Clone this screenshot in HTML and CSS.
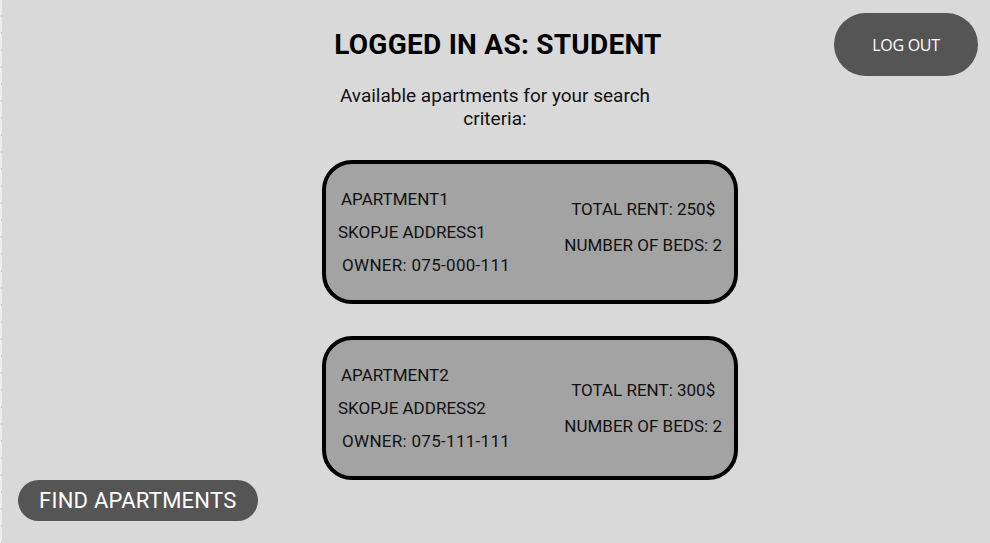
FILE: index.html
```html
<!DOCTYPE html>
<html lang="en">
<head>
<meta charset="utf-8">
<title>Apartments</title>
<link rel="stylesheet" href="styles.css">
</head>
<body>
<div class="page">
  <header class="top">
    <div class="spacer"></div>
    <h1 class="title">LOGGED IN AS: STUDENT</h1>
    <div class="actions"><button class="logout">LOG OUT</button></div>
  </header>
  <p class="subtitle">Available apartments for your search criteria:</p>
  <section class="list">
    <article class="card card-first">
      <div class="info">
        <span class="name">APARTMENT1</span>
        <span class="addr">SKOPJE ADDRESS1</span>
        <span class="owner">OWNER: 075-000-111</span>
      </div>
      <div class="stats">
        <span>TOTAL RENT: 250$</span>
        <span>NUMBER OF BEDS: 2</span>
      </div>
    </article>
    <article class="card">
      <div class="info">
        <span class="name">APARTMENT2</span>
        <span class="addr">SKOPJE ADDRESS2</span>
        <span class="owner">OWNER: 075-111-111</span>
      </div>
      <div class="stats">
        <span>TOTAL RENT: 300$</span>
        <span>NUMBER OF BEDS: 2</span>
      </div>
    </article>
  </section>
  <div class="bottom"><button class="find">FIND APARTMENTS</button></div>
</div>
</body>
</html>
```
FILE: styles.css
```css
html, body {
  margin: 0;
  padding: 0;
}
body {
  width: 990px;
  height: 543px;
  overflow: hidden;
  font-family: Roboto, "Noto Sans", sans-serif;
  color: #111;
  background:
    repeating-linear-gradient(to bottom, transparent 0 15px, #c6c6c6 15px 17px, transparent 17px 16px) 1px 0 / 1px 100% no-repeat,
    linear-gradient(#ececec, #ececec) 0 0 / 2px 100% no-repeat,
    #d9d9d9;
}
.page {
  display: flex;
  flex-direction: column;
}
.top {
  display: grid;
  grid-template-columns: 1fr auto 1fr;
  align-items: center;
  padding-top: 13px;
}
.title {
  margin: 0;
  font-size: 28px;
  font-weight: 700;
  color: #000;
  letter-spacing: 0.25px;
  padding-left: 6px;
}
.actions {
  display: flex;
  justify-content: flex-end;
  padding-right: 12px;
}
.logout {
  width: 144px;
  height: 63px;
  border: none;
  border-radius: 32px;
  background: #555555;
  color: #fff;
  font-family: "Open Sans", Roboto, sans-serif;
  font-size: 16px;
  letter-spacing: -0.3px;
}
.subtitle {
  width: 330px;
  margin: 8px auto 0;
  text-align: center;
  font-size: 19px;
  line-height: 23px;
  color: #111;
}
.list {
  display: flex;
  flex-direction: column;
  align-items: center;
  gap: 32px;
  padding-left: 70px;
  margin-top: 30px;
}
.card {
  box-sizing: border-box;
  width: 416px;
  height: 144px;
  border: 4px solid #000;
  border-radius: 30px;
  background: #a3a3a3;
  display: flex;
  align-items: center;
  justify-content: space-between;
  padding: 0 12px;
  font-size: 17px;
}
.info {
  display: flex;
  flex-direction: column;
  gap: 13px;
  line-height: 20px;
}
.name { margin-left: 3px; }
.owner { margin-left: 4px; letter-spacing: 0.3px; }
.stats {
  display: flex;
  flex-direction: column;
  align-items: center;
  gap: 16px;
  line-height: 20px;
}
.card-first .stats {
  margin-bottom: 10px;
}
.bottom {
  display: flex;
  padding-left: 18px;
}
.find {
  height: 41px;
  padding: 0 21px;
  border: none;
  border-radius: 21px;
  background: #555555;
  color: #fff;
  font-family: Roboto, sans-serif;
  font-size: 22px;
  letter-spacing: 0.25px;
}
```
